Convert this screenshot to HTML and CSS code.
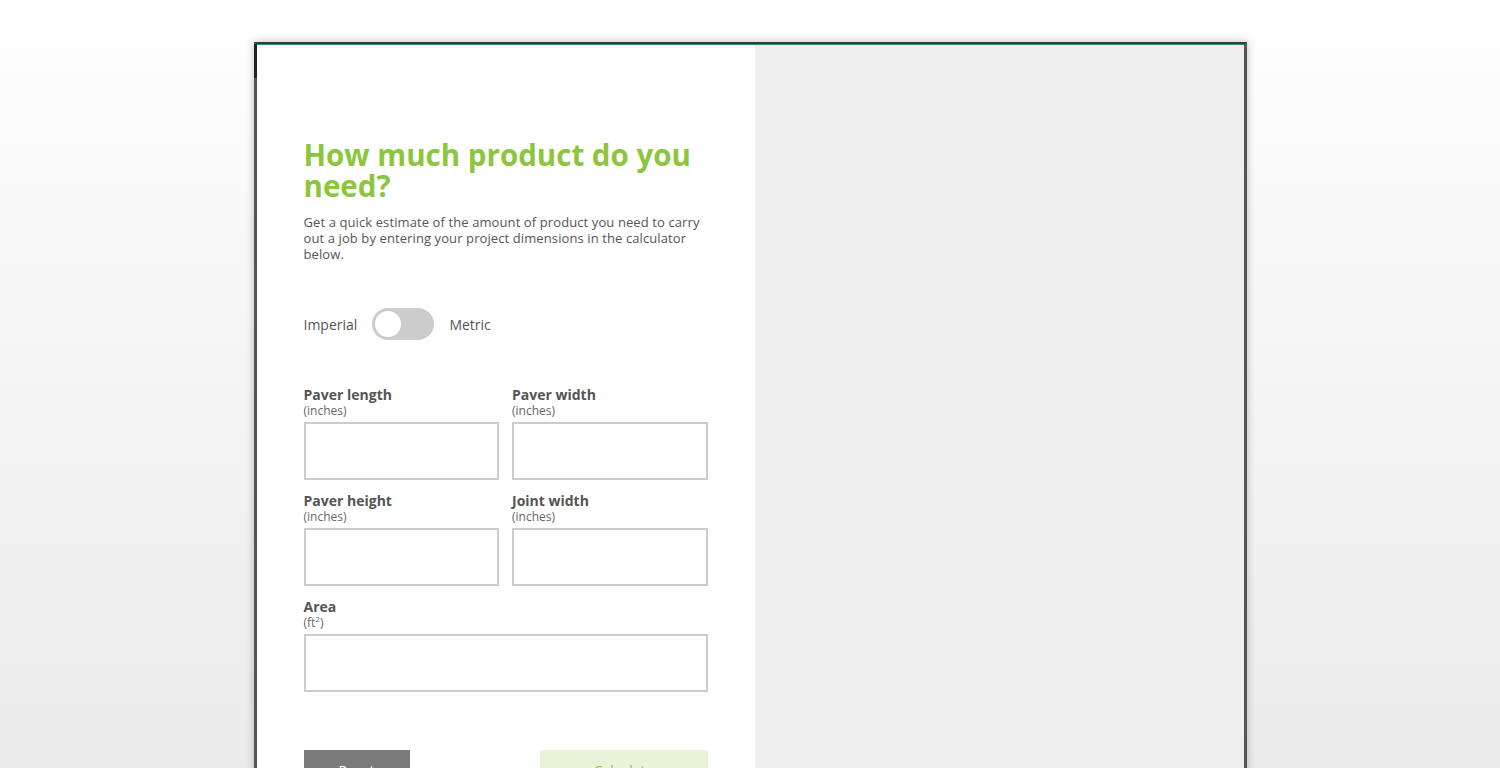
FILE: index.html
```html
<!DOCTYPE html>
<html lang="en">
<head>
  <meta charset="UTF-8">
  <meta name="viewport" content="width=device-width, initial-scale=1.0">
  <title>Product calculator</title>
  <link rel="stylesheet" href="styles.css">
</head>
<body>
  <div class="device">
    <div class="device-screen">
      <!-- 计算器 -->
      <div class="calc">
        <h1 class="calc-title">How much product do you need?</h1>
        <p class="calc-intro">Get a quick estimate of the amount of product you need to carry out a job by entering your project dimensions in the calculator below.</p>

        <div class="unit-switch">
          <span>Imperial</span>
          <span class="switch"><span class="switch-knob"></span></span>
          <span>Metric</span>
        </div>

        <div class="fields">
          <label class="field">
            <span class="field-name">Paver length</span>
            <span class="field-unit">(inches)</span>
            <input type="text">
          </label>
          <label class="field">
            <span class="field-name">Paver width</span>
            <span class="field-unit">(inches)</span>
            <input type="text">
          </label>
          <label class="field">
            <span class="field-name">Paver height</span>
            <span class="field-unit">(inches)</span>
            <input type="text">
          </label>
          <label class="field">
            <span class="field-name">Joint width</span>
            <span class="field-unit">(inches)</span>
            <input type="text">
          </label>
          <label class="field field-wide">
            <span class="field-name">Area</span>
            <span class="field-unit">(ft<sup>2</sup>)</span>
            <input type="text">
          </label>
        </div>

        <div class="actions">
          <button class="btn btn-reset">Reset</button>
          <button class="btn btn-calc">Calculate</button>
        </div>
      </div>

      <!-- 结果区 -->
      <div class="result"></div>
    </div>
  </div>
</body>
</html>
```

FILE: styles.css
```css
html, body {
  margin: 0;
  height: 100%;
}

body {
  background: linear-gradient(to bottom, #ffffff 0px, #fbfbfb 120px, #ecebeb 768px);
  font-family: "Open Sans", "Liberation Sans", sans-serif;
  color: #555;
  overflow: hidden;
}

/* 外框 */
.device {
  position: relative;
  width: 987px;
  margin: 42px auto 0;
  border: solid 3px #555;
  border-top: solid 2px #3b3b3b;
  border-bottom: 0;
  box-shadow: 0 0 8px rgba(0, 0, 0, 0.25);
  height: 740px;
}
.device::before {
  content: '';
  position: absolute;
  left: -3px;
  top: 0;
  width: 3px;
  height: 34px;
  background: #222;
}

.device-screen {
  display: grid;
  grid-template-columns: 498px 1fr;
  height: 100%;
  border-top: solid 1px #2f8c7f;
}

/* 左侧计算器 */
.calc {
  background: #fff;
  padding: 94px 47px 0;
}

.calc-title {
  margin: 0;
  font-size: 29.5px;
  line-height: 31px;
  font-weight: 700;
  color: #8cc63e;
}

.calc-intro {
  margin: 13px 0 0;
  font-size: 13px;
  letter-spacing: 0.1px;
  line-height: 16px;
  color: #555;
}

.unit-switch {
  display: flex;
  align-items: center;
  gap: 15px;
  margin-top: 46px;
  font-size: 14px;
}
.switch {
  display: inline-block;
  width: 62px;
  height: 32px;
  border-radius: 16px;
  background: #ccc;
  position: relative;
}
.switch-knob {
  position: absolute;
  left: 3px;
  top: 3px;
  width: 26px;
  height: 26px;
  border-radius: 50%;
  background: #fff;
}

.fields {
  display: grid;
  grid-template-columns: 1fr 1fr;
  column-gap: 13px;
  row-gap: 12px;
  margin-top: 46px;
}
.field {
  display: flex;
  flex-direction: column;
}
.field-wide {
  grid-column: 1 / 3;
}
.field-name {
  font-size: 14px;
  font-weight: 700;
  line-height: 17px;
}
.field-unit {
  font-size: 12px;
  line-height: 15px;
  margin-bottom: 4px;
  color: #666;
}
.field-unit sup {
  font-size: 8px;
  line-height: 0;
}
.field input {
  box-sizing: border-box;
  height: 58px;
  border: solid 2px #ccc;
  background: #fff;
  outline: none;
}

.actions {
  display: flex;
  justify-content: space-between;
  margin-top: 58px;
}
.btn {
  height: 40px;
  border: 0;
  font-family: inherit;
  font-size: 14px;
}
.btn-reset {
  width: 106px;
  background: #7a7a7a;
  color: #fff;
}
.btn-calc {
  width: 168px;
  background: #e8f3d8;
  color: #8cc63e;
}

/* 右侧结果 */
.result {
  background: #f0efef;
}
```
